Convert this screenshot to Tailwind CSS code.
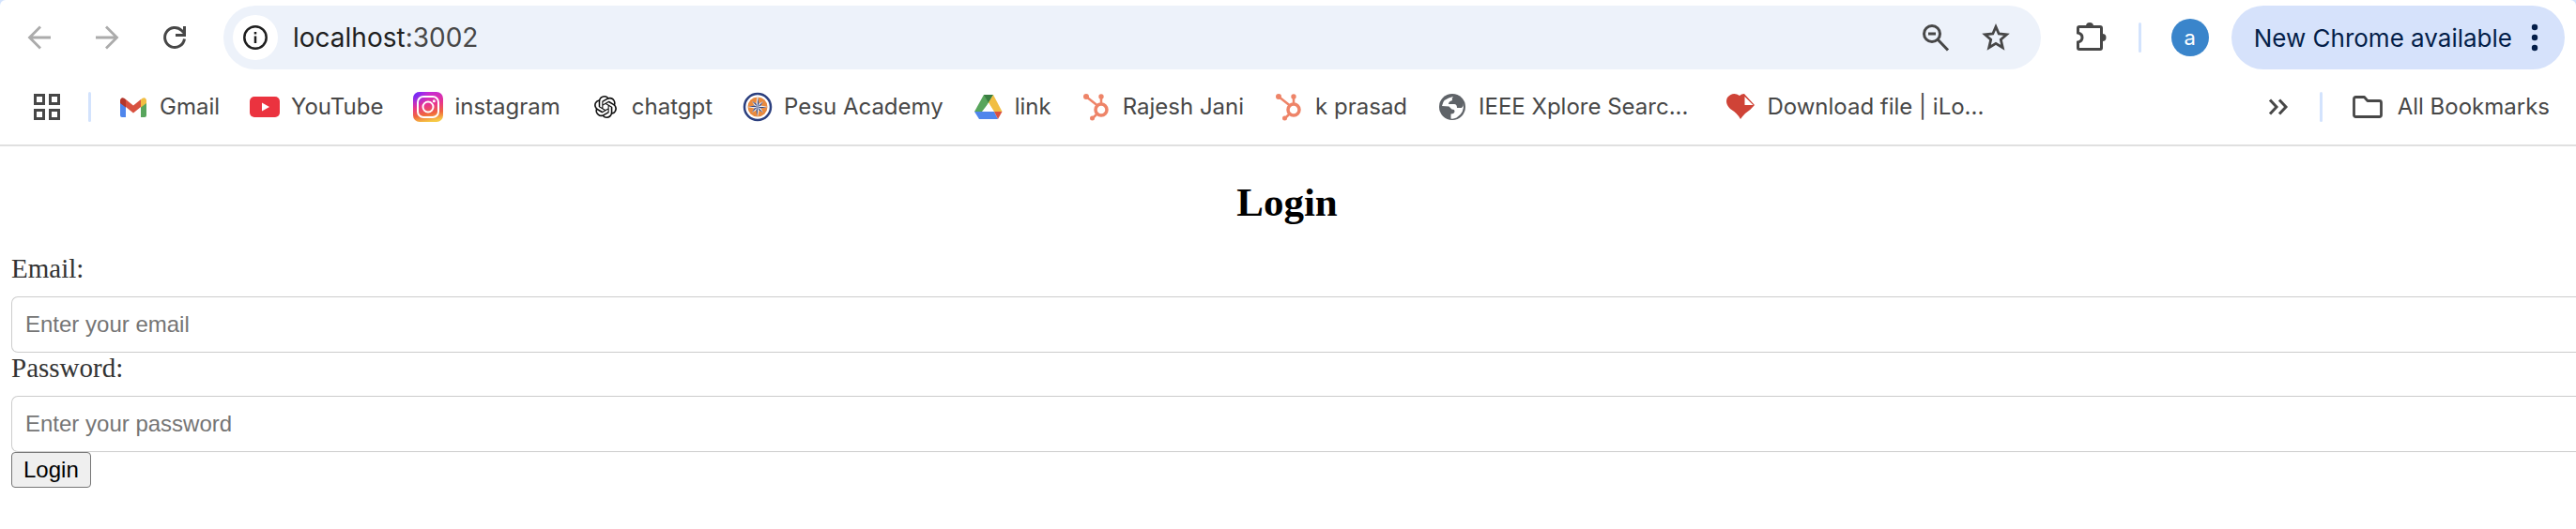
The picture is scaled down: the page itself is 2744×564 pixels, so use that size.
<!DOCTYPE html>
<html lang="en">
<head>
<meta charset="utf-8">
<title>Login</title>
<script src="https://cdn.jsdelivr.net/npm/@tailwindcss/browser@4"></script>
</head>
<body class="bg-white font-['Inter',sans-serif] text-[#474747] overflow-x-hidden">
<div class="bg-[#d3e3fd]">
<header class="border-b-2 border-[#e0e0e0] bg-white rounded-t-md">
  <div class="flex items-center h-20 pl-6 pr-3">
    <nav class="flex items-center gap-9 shrink-0" aria-label="History">
      <button aria-label="Back" class="text-[#ababab]"><svg class="size-9" viewBox="0 0 36 36" fill="none" stroke="currentColor" stroke-width="2.8"><path d="M30 18H8M19 6.500L7.500 18L19 29.500"/></svg></button>
      <button aria-label="Forward" class="text-[#ababab]"><svg class="size-9" viewBox="0 0 36 36" fill="none" stroke="currentColor" stroke-width="2.800"><path d="M6 18h22M17 6.500L28.500 18L17 29.500"/></svg></button>
      <button aria-label="Reload"><svg class="size-9" viewBox="0 0 36 36" fill="none" stroke="currentColor" stroke-width="3"><path d="M28.500 19.500A10.500 10.500 0 1 1 25.500 10.500L28 13"/><path d="M28.500 6v9.500H19"/></svg></button>
    </nav>
    <div class="flex items-center flex-1 h-[68px] ml-[34px] pl-2.5 pr-7 rounded-full bg-[#edf2fa]">
      <button aria-label="View site information" class="flex items-center justify-center size-12 shrink-0 rounded-full bg-white text-[#1f1f1f]"><svg class="size-7" viewBox="0 0 28 28" fill="none" stroke="currentColor" stroke-width="2.500"><circle cx="14" cy="14" r="11.700"/><path d="M14 12.500v7.500M14 8v2.500"/></svg></button>
      <div class="flex-1 ml-4 text-[28px] leading-9 text-[#1f1f1f]">localhost<span class="text-[#474747]">:3002</span></div>
      <div class="flex items-center gap-7">
        <button aria-label="Zoom"><svg class="size-9" viewBox="0 0 36 36" fill="none" stroke="currentColor" stroke-width="3"><circle cx="12" cy="14" r="8.500"/><path d="M8 14h8M18 20L29 31.500"/></svg></button>
        <button aria-label="Bookmark this tab"><svg class="size-9" viewBox="0 0 36 36" fill="none" stroke="currentColor" stroke-width="2.800"><path d="M16 6.500L19.200 14L27.500 14.800L21.300 20.300L23.300 28.800L16 24.300L8.700 28.800L10.700 20.300L4.500 14.800L12.800 14Z"/></svg></button>
      </div>
    </div>
    <button aria-label="Extensions" class="ml-9 shrink-0"><svg class="size-9" viewBox="0 0 36 36"><path d="M3.500 13V8q0-1.500 1.500-1.500H27q1.500 0 1.500 1.500v21q0 1.500-1.500 1.500H5q-1.500 0-1.500-1.500v-6q4.500-1 4.500-5t-4.500-5Z" fill="none" stroke="currentColor" stroke-width="3"/><path d="M12 6a4 4 0 0 1 8 0ZM29.500 14a4 4 0 0 1 0 8Z" fill="currentColor"/><path d="M1 14.500q4 .5 4 3.500t-4 3.500Z" fill="#fff"/></svg></button>
    <span class="w-[3px] h-8 ml-8 shrink-0 rounded-full bg-[#d3e3fd]"></span>
    <button aria-label="Profile" class="size-10 ml-8 shrink-0 rounded-full bg-[#3a85cb] text-white text-[22px] leading-10">a</button>
    <button class="flex items-center gap-5 h-[68px] ml-6 pl-6 pr-7 shrink-0 rounded-full bg-[#d6e2fb] text-[#041e49] text-[26px] whitespace-nowrap">New Chrome available
      <svg class="w-2 h-8" viewBox="0 0 8 32" fill="currentColor"><circle cx="4" cy="5" r="3.200"/><circle cx="4" cy="16" r="3.200"/><circle cx="4" cy="27" r="3.200"/></svg></button>
  </div>
  <div class="flex items-center h-[74px] pl-9 pr-7 pb-1.5 text-2xl leading-8 whitespace-nowrap">
    <button aria-label="Apps" class="shrink-0"><svg class="size-7" viewBox="0 0 28 28" fill="none" stroke="currentColor" stroke-width="3"><path d="M1.500 1.500h9v9h-9ZM17.500 1.500h9v9h-9ZM1.500 17.500h9v9h-9ZM17.500 17.500h9v9h-9Z"/></svg></button>
    <span class="w-[3px] h-8 ml-[30px] mr-[29px] shrink-0 rounded-full bg-[#d3e3fd]"></span>
    <nav class="flex items-center gap-8" aria-label="Bookmarks">
      <a href="#" class="flex items-center gap-3"><svg class="size-8" viewBox="0 0 32 32"><path d="M2 9v16q0 2 2 2h4V13Z" fill="#4f86ec"/><path d="M24 13v14h4q2 0 2-2V9Z" fill="#58a55c"/><path d="M8 8l8 6.500L24 8v8l-8 6.500L8 16Z" fill="#d85140"/><path d="M24 8q2.500-2.500 4.500-1.500T30 10v2l-6 4.500Z" fill="#f1be42"/><path d="M8 8Q5.500 5.500 3.500 6.500T2 10v2l6 4.500Z" fill="#b3362b"/></svg>Gmail</a>
      <a href="#" class="flex items-center gap-3"><svg class="size-8" viewBox="0 0 32 32"><rect y="5" width="32" height="22" rx="5" fill="#eb333f"/><path d="M13 11.500v9l8-4.500Z" fill="#fff"/></svg>YouTube</a>
      <a href="#" class="flex items-center gap-3"><svg class="size-8" viewBox="0 0 32 32"><defs><linearGradient id="ig" x1=".3" y1="0" x2=".5" y2="1"><stop offset="0" stop-color="#c02be0"/><stop offset=".45" stop-color="#e8348e"/><stop offset=".75" stop-color="#f0663c"/><stop offset="1" stop-color="#f6c945"/></linearGradient><radialGradient id="igb" cx="0" cy="0" r=".55"><stop offset="0" stop-color="#4b2bff"/><stop offset="1" stop-color="#8b2bff" stop-opacity="0"/></radialGradient></defs><rect width="32" height="32" rx="7" fill="url(#ig)"/><rect width="32" height="32" rx="7" fill="url(#igb)"/><g fill="none" stroke="#fff" stroke-width="2"><rect x="5" y="5" width="22" height="22" rx="6"/><circle cx="16" cy="16" r="5.500"/></g><circle cx="22.300" cy="9.700" r="1.500" fill="#fff"/></svg>instagram</a>
      <a href="#" class="flex items-center gap-3"><svg class="size-8" viewBox="-4 -4 32 32" fill="#111"><path d="M22.2819 9.8211a5.9847 5.9847 0 0 0-.5157-4.9108 6.0462 6.0462 0 0 0-6.5098-2.9A6.0651 6.0651 0 0 0 4.9807 4.1818a5.9847 5.9847 0 0 0-3.9977 2.9 6.0462 6.0462 0 0 0 .7427 7.0966 5.98 5.98 0 0 0 .511 4.9107 6.051 6.051 0 0 0 6.5146 2.9001A5.9847 5.9847 0 0 0 13.2599 24a6.0557 6.0557 0 0 0 5.7718-4.2058 5.9894 5.9894 0 0 0 3.9977-2.9001 6.0557 6.0557 0 0 0-.7475-7.0729zm-9.022 12.6081a4.4755 4.4755 0 0 1-2.8764-1.0408l.1419-.0804 4.7783-2.7582a.7948.7948 0 0 0 .3927-.6813v-6.7369l2.02 1.1686a.071.071 0 0 1 .038.052v5.5826a4.504 4.504 0 0 1-4.4945 4.4944zm-9.6607-4.1254a4.4708 4.4708 0 0 1-.5346-3.0137l.142.0852 4.783 2.7582a.7712.7712 0 0 0 .7806 0l5.8428-3.3685v2.3324a.0804.0804 0 0 1-.0332.0615L9.74 19.9502a4.4992 4.4992 0 0 1-6.1408-1.6464zM2.3408 7.8956a4.485 4.485 0 0 1 2.3655-1.9728V11.6a.7664.7664 0 0 0 .3879.6765l5.8144 3.3543-2.0201 1.1685a.0757.0757 0 0 1-.071 0l-4.8303-2.7865A4.504 4.504 0 0 1 2.3408 7.872zm16.5963 3.8558L13.1038 8.364 15.1192 7.2a.0757.0757 0 0 1 .071 0l4.8303 2.7913a4.4944 4.4944 0 0 1-.6765 8.1042v-5.6772a.79.79 0 0 0-.407-.667zm2.0107-3.0231l-.142-.0852-4.7735-2.7818a.7759.7759 0 0 0-.7854 0L9.409 9.2297V6.8974a.0662.0662 0 0 1 .0284-.0615l4.8303-2.7866a4.4992 4.4992 0 0 1 6.6802 4.66zM8.3065 12.863l-2.02-1.1638a.0804.0804 0 0 1-.038-.0567V6.0742a4.4992 4.4992 0 0 1 7.3757-3.4537l-.142.0805L8.704 5.459a.7948.7948 0 0 0-.3927.6813zm1.0976-2.3654l2.602-1.4998 2.6069 1.4998v2.9994l-2.5974 1.4997-2.6067-1.4997Z"/></svg>chatgpt</a>
      <a href="#" class="flex items-center gap-3"><svg class="size-8" viewBox="-16 -16 32 32"><circle r="14" fill="#fff" stroke="#2b3f7e" stroke-width="2.500"/><circle r="10.500" fill="#e98a3e"/><path d="M0-14L1.500-3.500L6-6L3.500-1.500L11 0L3.500 1.500L6 6L1.500 3.500L0 11L-1.500 3.500L-6 6L-3.500 1.500L-11 0L-3.500-1.500L-6-6L-1.500-3.500Z" fill="#f1f1f4"/><path d="M0-10V0L1.500-3.500ZM0 0L6-6L3.500-1.500ZM0 0H10L3.500 1.500ZM0 0L6 6L1.500 3.500ZM0 0V10L-1.500 3.500ZM0 0L-6 6L-3.500 1.500ZM0 0H-10L-3.500-1.500ZM0 0L-6-6L-1.500-3.500Z" fill="#33457d"/></svg>Pesu Academy</a>
      <a href="#" class="flex items-center gap-3"><svg class="size-8" viewBox="0 0 32 32"><path d="M11 3h10l-5 9L9 21H1Z" fill="#58a55c"/><path d="M11 3h10l-5 8.500Z" fill="#3a7d42"/><path d="M21 3l9.500 18H22L16 11.500Z" fill="#f1be42"/><path d="M1 21h21l4 8H6Z" fill="#4f86ec"/><path d="M22 21h8.500L26 29Z" fill="#d85140"/><path d="M16 11.500L21.500 21h-11Z" fill="#fff"/></svg>link</a>
      <a href="#" class="flex items-center gap-3"><svg class="size-8" viewBox="0 0 32 32" fill="none" stroke="#ee8468" stroke-width="2.500"><circle cx="21" cy="19" r="6" stroke-width="3.500"/><path d="M5 5l12 9.500M21 6v7M12 28l5-5"/><g fill="#ee8468" stroke="none"><circle cx="5" cy="5" r="3"/><circle cx="21" cy="5" r="2.700"/><circle cx="11.500" cy="28" r="2.500"/></g></svg>Rajesh Jani</a>
      <a href="#" class="flex items-center gap-3"><svg class="size-8" viewBox="0 0 32 32" fill="none" stroke="#ee8468" stroke-width="2.500"><circle cx="21" cy="19" r="6" stroke-width="3.500"/><path d="M5 5l12 9.500M21 6v7M12 28l5-5"/><g fill="#ee8468" stroke="none"><circle cx="5" cy="5" r="3"/><circle cx="21" cy="5" r="2.700"/><circle cx="11.500" cy="28" r="2.500"/></g></svg>k prasad</a>
      <a href="#" class="flex items-center gap-3"><svg class="size-8" viewBox="0 0 32 32"><circle cx="16" cy="16" r="14" fill="#5f6368"/><path d="M5 15q1-8 12-10-2 2-1 4-4 1-4 4h6q3 0 3 4h5q2-2 1.500-5 2 10-7 15.500-3 1.500-6 1v-5q4 0 4-3 0-2-3-2l-3-3Z" fill="#fff"/></svg>IEEE Xplore Searc...</a>
      <a href="#" class="flex items-center gap-3 ml-2"><svg class="size-8" viewBox="0 0 32 32"><path d="M16 29Q13 23 5 18Q-1 12 2 6Q8-1 15 4Q17 2 20 2L31 14Q26 20 21 23Q18 26 16 29Z" fill="#cf4337"/><path d="M20.500 5v9h9Z" fill="#fff"/></svg>Download file | iLo...</a>
    </nav>
    <div class="flex items-center ml-auto">
      <button aria-label="More bookmarks"><svg class="w-6 h-8" viewBox="0 0 24 32" fill="none" stroke="currentColor" stroke-width="3"><path d="M3 8.500l7 7.500-7 7.500M13 8.500l7 7.500-7 7.500"/></svg></button>
      <span class="w-[3px] h-8 ml-8 mr-8 rounded-full bg-[#d3e3fd]"></span>
      <button class="flex items-center gap-4"><svg class="size-8" viewBox="0 0 32 32" fill="none" stroke="currentColor" stroke-width="2.800" stroke-linejoin="round"><path d="M3.500 5.500h9L16 9.500h12.500q2 0 2 2v13q0 2-2 2h-25q-2 0-2-2v-17q0-2 2-2Z"/></svg>All Bookmarks</button>
    </div>
  </div>
</header>
</div>
<main class="pl-3">
  <h1 class="pt-9 pr-3.5 text-center font-['Liberation_Serif',serif] font-bold text-[43px] leading-[48px] text-black">Login</h1>
  <form class="pt-[30px] text-[#333]" onsubmit="return false">
    <label for="email" class="block pb-3.5 font-['Liberation_Serif',serif] text-[29px] leading-8">Email:</label>
    <input id="email" type="email" placeholder="Enter your email" class="block w-full h-[60px] px-3.5 rounded-l-[7px] border border-r-0 border-[#ccc] font-['Liberation_Sans',sans-serif] text-2xl placeholder:text-[#757575]">
    <label for="password" class="block pb-3.5 font-['Liberation_Serif',serif] text-[29px] leading-8">Password:</label>
    <input id="password" type="password" placeholder="Enter your password" class="block w-full h-[60px] px-3.5 rounded-l-[7px] border border-r-0 border-[#ccc] font-['Liberation_Sans',sans-serif] text-2xl placeholder:text-[#757575]">
    <button type="submit" class="block h-[38px] px-3 rounded border border-[#767676] bg-[#efefef] font-['Liberation_Sans',sans-serif] text-2xl leading-9 text-black">Login</button>
  </form>
</main>
</body>
</html>
